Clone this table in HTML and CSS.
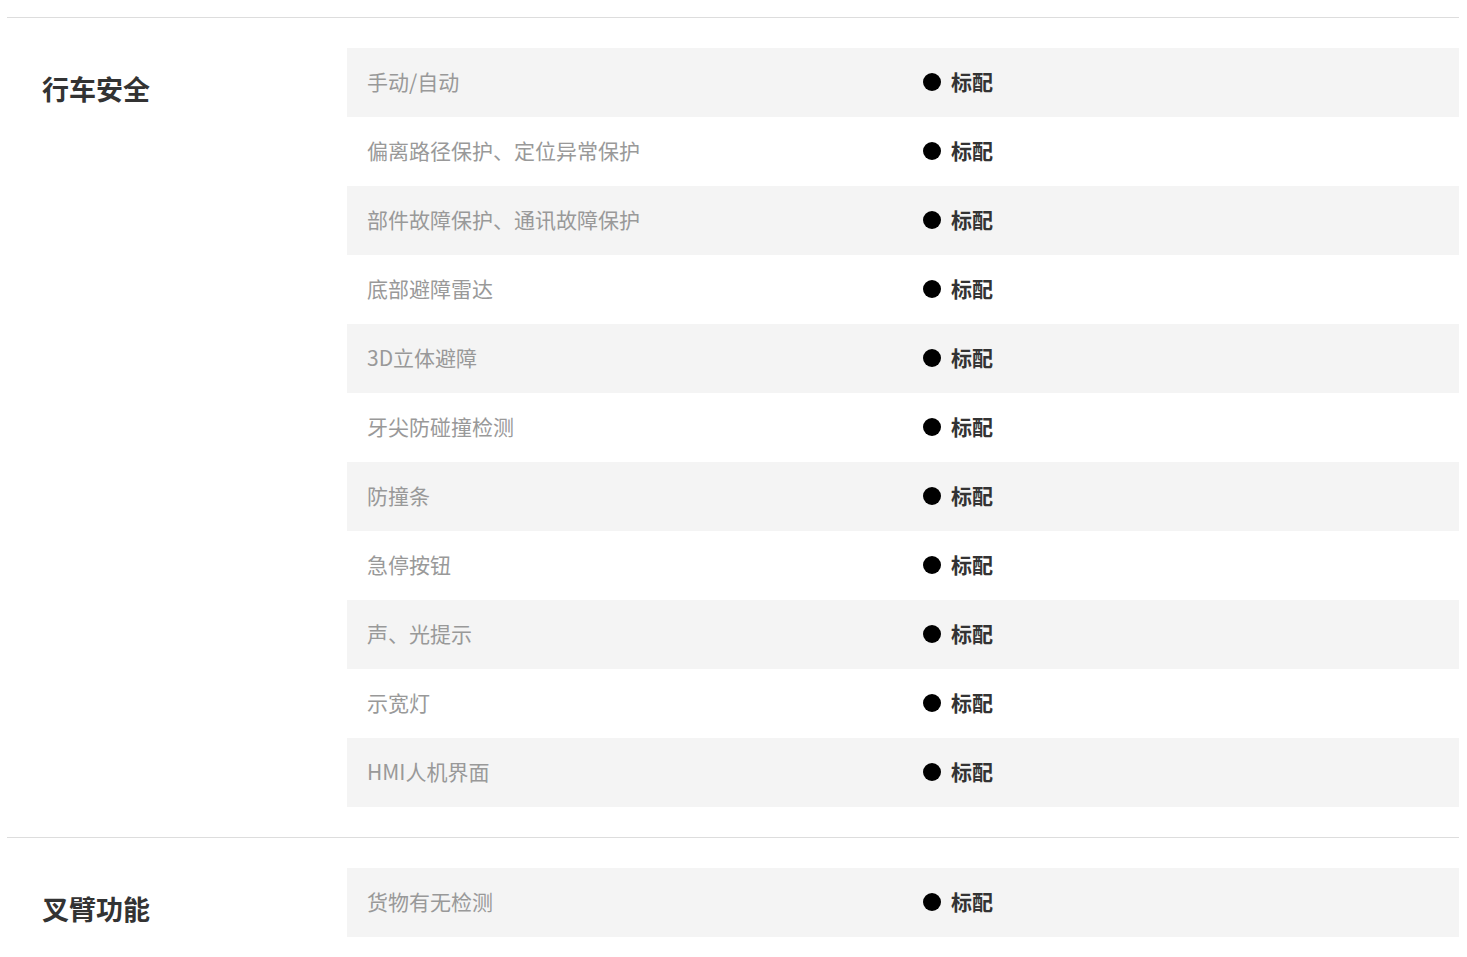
FILE: index.html
```html
<!DOCTYPE html>
<html lang="zh-CN">
<head>
<meta charset="utf-8">
<title>参数配置</title>
<link rel="stylesheet" href="styles.css">
</head>
<body>
<div class="page">
  <section class="group">
    <h2 class="group-title">行车安全</h2>
    <div class="spec-list">
      <div class="spec-row"><div class="spec-name">手动/自动</div><div class="spec-val"><span class="dot"></span>标配</div></div>
      <div class="spec-row"><div class="spec-name">偏离路径保护、定位异常保护</div><div class="spec-val"><span class="dot"></span>标配</div></div>
      <div class="spec-row"><div class="spec-name">部件故障保护、通讯故障保护</div><div class="spec-val"><span class="dot"></span>标配</div></div>
      <div class="spec-row"><div class="spec-name">底部避障雷达</div><div class="spec-val"><span class="dot"></span>标配</div></div>
      <div class="spec-row"><div class="spec-name">3D立体避障</div><div class="spec-val"><span class="dot"></span>标配</div></div>
      <div class="spec-row"><div class="spec-name">牙尖防碰撞检测</div><div class="spec-val"><span class="dot"></span>标配</div></div>
      <div class="spec-row"><div class="spec-name">防撞条</div><div class="spec-val"><span class="dot"></span>标配</div></div>
      <div class="spec-row"><div class="spec-name">急停按钮</div><div class="spec-val"><span class="dot"></span>标配</div></div>
      <div class="spec-row"><div class="spec-name">声、光提示</div><div class="spec-val"><span class="dot"></span>标配</div></div>
      <div class="spec-row"><div class="spec-name">示宽灯</div><div class="spec-val"><span class="dot"></span>标配</div></div>
      <div class="spec-row"><div class="spec-name">HMI人机界面</div><div class="spec-val"><span class="dot"></span>标配</div></div>
    </div>
  </section>
  <section class="group">
    <h2 class="group-title">叉臂功能</h2>
    <div class="spec-list">
      <div class="spec-row"><div class="spec-name">货物有无检测</div><div class="spec-val"><span class="dot"></span>标配</div></div>
    </div>
  </section>
</div>
</body>
</html>
```
FILE: styles.css
```css
html, body {
  margin: 0;
  padding: 0;
  background: #fff;
}
body {
  font-family: "Noto Sans CJK SC", "Noto Sans", sans-serif;
  color: #333;
}
.page {
  padding: 17px 8px 0 7px;
}
.group {
  display: flex;
  border-top: 1px solid #dddddd;
  padding: 30px 0;
}
.group-title {
  width: 305px;
  flex: none;
  margin: 0;
  padding: 21px 0 0 35px;
  font-size: 27px;
  line-height: 40px;
  font-weight: 700;
  color: #333;
  align-self: flex-start;
}
.spec-list {
  flex: 1;
}
.spec-row {
  display: flex;
  height: 69px;
  align-items: center;
}
.spec-row:nth-child(odd) {
  background: #f4f4f4;
}
.spec-name, .spec-val {
  flex: 1 1 0;
  padding-left: 20px;
  padding-bottom: 4px;
  font-size: 21px;
  line-height: 30px;
}
.spec-name {
  color: #999;
}
.spec-val {
  display: flex;
  align-items: center;
  font-weight: 700;
  color: #333;
}
.dot {
  width: 18px;
  height: 18px;
  border-radius: 50%;
  background: #000;
  margin-right: 10px;
  margin-top: 2px;
  flex: none;
}
```
